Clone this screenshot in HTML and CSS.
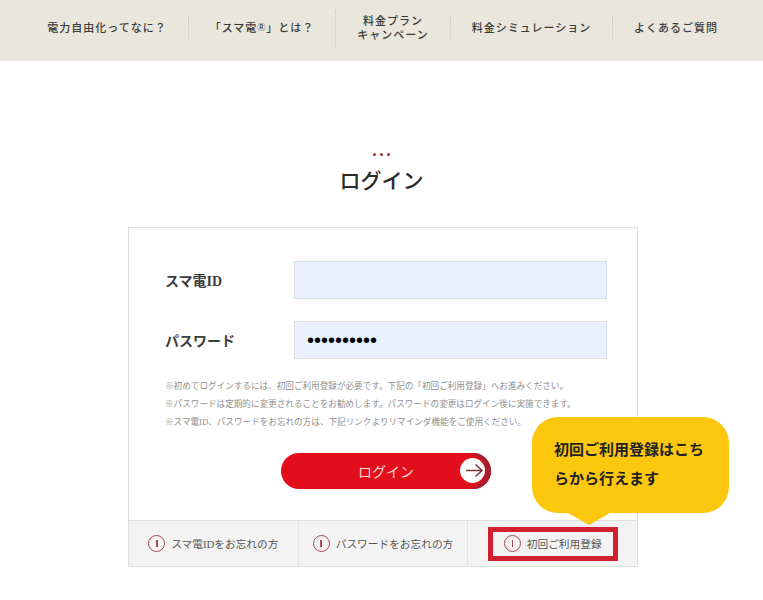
FILE: index.html
```html
<!DOCTYPE html>
<html lang="ja">
<head>
  <meta charset="UTF-8">
  <title>ログイン</title>
  <link rel="stylesheet" href="styles.css">
</head>
<body>
  <nav class="gnav">
    <a class="gnav-item item-1" href="#">電力自由化ってなに&#xFF1F;</a>
    <a class="gnav-item item-2" href="#">「スマ電<small>Ⓡ</small>」とは&#xFF1F;</a>
    <a class="gnav-item item-3" href="#">料金プラン<br>キャンペーン</a>
    <a class="gnav-item item-4" href="#">料金シミュレーション</a>
    <a class="gnav-item item-5" href="#">よくあるご質問</a>
  </nav>

  <main>
    <div class="dots"><i></i><i></i><i></i></div>
    <h1>ログイン</h1>

    <div class="card">
      <form class="login-form">
        <div class="row">
          <label for="uid">スマ電ID</label>
          <input id="uid" type="text">
        </div>
        <div class="row">
          <label for="pw">パスワード</label>
          <input id="pw" type="password" value="1234567890">
        </div>

        <div class="notes">
          <p>※初めてログインするには、初回ご利用登録が必要です。下記の「初回ご利用登録」へお進みください。</p>
          <p>※パスワードは定期的に変更されることをお勧めします。パスワードの変更はログイン後に実施できます。</p>
          <p>※スマ電ID、パスワードをお忘れの方は、下記リンクよりリマインダ機能をご使用ください。</p>
        </div>

        <button class="btn-login" type="button">
          <span>ログイン</span>
          <svg class="btn-arrow" width="36" height="36" viewBox="0 0 36 36">
            <circle cx="18" cy="18" r="18" fill="#a61f30"/>
            <circle cx="12" cy="18" r="18" fill="#e30e1b"/>
            <circle cx="17.5" cy="17.5" r="12.5" fill="#fff"/>
            <path d="M11 17.5H27M20.5 11.5L27 17.5L20.5 23.5" fill="none" stroke="#7a3a40" stroke-width="1.6"/>
          </svg>
        </button>
      </form>

      <div class="links">
        <div class="link-cell">
          <a href="#"><span class="ico"></span>スマ電IDをお忘れの方</a>
        </div>
        <div class="link-cell">
          <a href="#"><span class="ico"></span>パスワードをお忘れの方</a>
        </div>
        <div class="link-cell">
          <a class="marked" href="#"><span class="ico"></span>初回ご利用登録</a>
        </div>
      </div>

      <div class="callout">初回ご利用登録はこちらから行えます</div>
    </div>
  </main>
</body>
</html>
```

FILE: styles.css
```css
body {
  margin: 0;
  background-color: #fff;
  color: #333;
  font-family: "Liberation Serif", "Noto Sans CJK JP", sans-serif;
}

a {
  color: inherit;
  text-decoration: none;
}

/* ヘッダーナビ */
.gnav {
  display: flex;
  align-items: center;
  box-sizing: border-box;
  height: 61px;
  padding: 0 0 5px 26px;
  background-color: #e9e6dc;
}

.gnav-item {
  display: flex;
  align-items: center;
  justify-content: center;
  box-sizing: border-box;
  height: 24px;
  padding-bottom: 2px;
  border-right: 1px dotted #c9c6bb;
  font-family: "Noto Sans CJK JP", sans-serif;
  font-size: 11px;
  font-weight: 500;
  line-height: 14px;
  letter-spacing: 1px;
  text-align: center;
  color: #3a3a3a;
}

.gnav-item small {
  font-size: 8px;
}

.item-1 { width: 163px; }
.item-2 { width: 147px; height: 37px; }
.item-3 { width: 115px; }
.item-4 { width: 162px; }
.item-5 { width: 126px; border-right: none; }

/* タイトル */
.dots {
  display: flex;
  justify-content: center;
  gap: 4px;
  margin-top: 92px;
}

.dots i {
  width: 3px;
  height: 3px;
  border-radius: 50%;
  background-color: #a03038;
}

h1 {
  margin: 6px 0 0;
  font-family: "Noto Sans CJK JP", sans-serif;
  font-size: 21px;
  font-weight: 500;
  line-height: 34px;
  text-align: center;
  color: #2b2b2b;
}

/* カード */
.card {
  position: relative;
  box-sizing: border-box;
  width: 510px;
  margin: 31px 0 0 128px;
  border: 1px solid #dedede;
}

.login-form {
  box-sizing: border-box;
  height: 292px;
  padding: 33px 30px 0 36px;
}

.row {
  display: flex;
  align-items: center;
}

.row + .row {
  margin-top: 22px;
}

.row label {
  width: 129px;
  font-size: 14px;
  font-weight: bold;
  color: #3c3c3c;
}

.row input {
  box-sizing: border-box;
  width: 313px;
  height: 38px;
  padding: 0 12px;
  border: 1px solid #dcdfe6;
  background-color: #e8f0fe;
  font-size: 20px;
  color: #000;
  outline: none;
}

.notes {
  margin-top: 18px;
  font-size: 8.6px;
  color: #8f8f8f;
}

.notes p {
  margin: 0;
  line-height: 18px;
  white-space: nowrap;
}

.btn-login {
  position: relative;
  display: block;
  width: 210px;
  height: 36px;
  margin: 22px 0 0 116px;
  padding: 0;
  border: none;
  border-radius: 18px;
  background-color: #e30e1b;
  color: #f8d5d5;
  font-family: "Noto Sans CJK JP", sans-serif;
  font-size: 14px;
}

.btn-arrow {
  position: absolute;
  top: 0;
  right: 0;
}

/* 下部リンク */
.links {
  display: flex;
  box-sizing: border-box;
  height: 46px;
  border-top: 1px solid #dedede;
  background-color: #f3f3f3;
}

.link-cell {
  display: flex;
  flex: 1;
  align-items: center;
  justify-content: center;
  border-right: 1px solid #e2e2e2;
  font-size: 10.7px;
  color: #555;
}

.link-cell:last-child {
  border-right: none;
}

.link-cell a {
  display: flex;
  align-items: center;
  white-space: nowrap;
}

.ico {
  display: flex;
  align-items: center;
  justify-content: center;
  box-sizing: border-box;
  width: 17px;
  height: 17px;
  margin-right: 6px;
  border: 1.5px solid #a8484e;
  border-radius: 50%;
}

.ico::after {
  content: "";
  width: 1.5px;
  height: 7px;
  background-color: #a8484e;
}

.link-cell a.marked {
  box-sizing: border-box;
  justify-content: center;
  width: 130px;
  height: 34px;
  border: 5px solid #d3202d;
}

/* 吹き出し */
.callout {
  position: absolute;
  top: 189px;
  left: 403px;
  box-sizing: border-box;
  width: 197px;
  height: 96px;
  padding: 17px 22px 0;
  border-radius: 26px;
  background-color: #fdc70e;
  font-family: "Noto Sans CJK JP", sans-serif;
  font-size: 15px;
  font-weight: bold;
  line-height: 29px;
  color: #222;
}

.callout::after {
  content: "";
  position: absolute;
  top: 96px;
  left: 36px;
  border-top: 12px solid #fdc70e;
  border-left: 21px solid transparent;
  border-right: 21px solid transparent;
}
```
